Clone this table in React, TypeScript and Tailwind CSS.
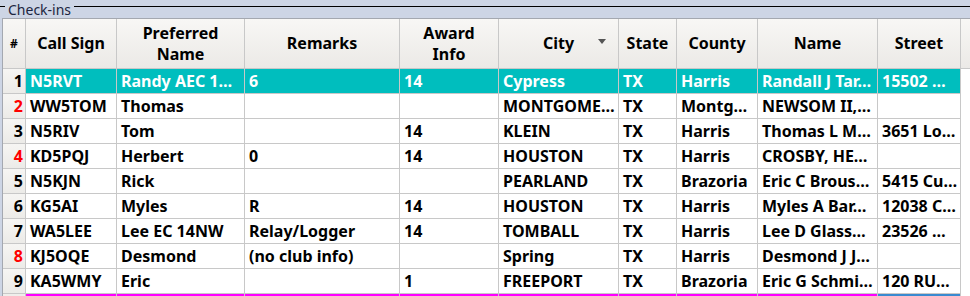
import React from 'react';

const cols = 'grid grid-cols-[23px_91px_128px_155px_99px_120px_58px_81px_120px_83px_1fr]';

const headers = ['Call Sign', 'Preferred\nName', 'Remarks', 'Award\nInfo', 'City', 'State', 'County', 'Name', 'Street'];

type Row = { n: number; red?: boolean; cells: string[] };

const rows: Row[] = [
  { n: 1, cells: ['N5RVT', 'Randy AEC 1…', '6', '14', 'Cypress', 'TX', 'Harris', 'Randall J Tar…', '15502 …'] },
  { n: 2, red: true, cells: ['WW5TOM', 'Thomas', '', '', 'MONTGOME…', 'TX', 'Montg…', 'NEWSOM II,…', ''] },
  { n: 3, cells: ['N5RIV', 'Tom', '', '14', 'KLEIN', 'TX', 'Harris', 'Thomas L M…', '3651 Lo…'] },
  { n: 4, red: true, cells: ['KD5PQJ', 'Herbert', '0', '14', 'HOUSTON', 'TX', 'Harris', 'CROSBY, HE…', ''] },
  { n: 5, cells: ['N5KJN', 'Rick', '', '', 'PEARLAND', 'TX', 'Brazoria', 'Eric C Brous…', '5415 Cu…'] },
  { n: 6, cells: ['KG5AI', 'Myles', 'R', '14', 'HOUSTON', 'TX', 'Harris', 'Myles A Bar…', '12038 C…'] },
  { n: 7, cells: ['WA5LEE', 'Lee EC 14NW', 'Relay/Logger', '14', 'TOMBALL', 'TX', 'Harris', 'Lee D Glass…', '23526 …'] },
  { n: 8, red: true, cells: ['KJ5OQE', 'Desmond', '(no club info)', '', 'Spring', 'TX', 'Harris', 'Desmond J J…', ''] },
  { n: 9, cells: ['KA5WMY', 'Eric', '', '1', 'FREEPORT', 'TX', 'Brazoria', 'Eric G Schmi…', '120 RU…'] },
];

export default function App() {
  return (
    <div className="h-[296px] w-[970px] overflow-hidden bg-[#cdd5e5] text-black" style={{ fontFamily: '"Noto Sans", sans-serif' }}>
      {/* group box title */}
      <div className="flex h-[18px] items-start">
        <div className="mt-[6px] h-px w-[5px] bg-black" />
        <span className="mx-[3px] text-[14px] leading-[19px] text-[#1c2540]">Check-ins</span>
        <div className="mt-[6px] h-px flex-1 bg-black" />
      </div>

      <div className="ml-[2px] h-[278px] border-l border-t border-[#a4a8b0] bg-white">
        {/* header */}
        <div className={`${cols} h-[50px] bg-gradient-to-b from-[#f8f7f5] to-[#ebe9e6] text-[16px] font-bold leading-[21px]`}>
          <div className="flex items-center justify-center border-b border-r border-[#c8c8c8] text-[12px]">#</div>
          {headers.map((h) => (
            <div key={h} className="relative flex items-center justify-center whitespace-pre-line border-b border-r border-[#c8c8c8] text-center">
              {h}
              {h === 'City' && (
                <svg className="absolute right-[12px] top-[20px]" width="8" height="5" viewBox="0 0 8 5">
                  <path d="M0 0H8L4 5Z" fill="#555" />
                </svg>
              )}
            </div>
          ))}
          <div className="border-b border-[#c8c8c8]" />
        </div>

        {/* body */}
        {rows.map((r) => {
          const sel = r.n === 1;
          return (
            <div key={r.n} className={`${cols} h-[25px] text-[16px] font-bold leading-[24px]`}>
              <div className={`border-b border-r border-[#c8c8c8] bg-gradient-to-b from-[#f6f5f3] to-[#ecebe8] pr-[2px] text-right ${r.red ? 'text-[#ff0000]' : 'text-black'}`}>
                {r.n}
              </div>
              {r.cells.map((c, i) => (
                <div
                  key={i}
                  className={`overflow-hidden whitespace-nowrap border-b border-r border-[#c8c8c8] pl-[4px] ${sel ? 'bg-[#00bebe] text-white' : 'text-black'}`}
                >
                  {c}
                </div>
              ))}
              <div />
            </div>
          );
        })}

        {/* next row, partly visible */}
        <div className={`${cols} h-[25px]`}>
          <div className="border-r border-[#c8c8c8] bg-[#efeeeb]" />
          {Array.from({ length: 8 }).map((_, i) => (
            <div key={i} className="border-r border-[#c8c8c8] bg-[#ff00ff]" />
          ))}
          <div className="border-r border-[#c8c8c8] bg-[#3a8ad0]" />
          <div />
        </div>
      </div>
    </div>
  );
}
